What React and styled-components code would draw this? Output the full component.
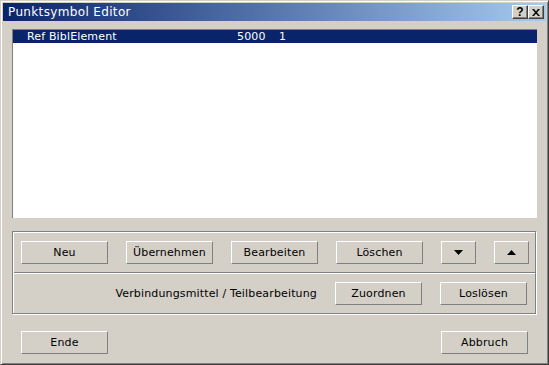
import React from 'react';
import styled, { createGlobalStyle } from 'styled-components';

const GlobalStyle = createGlobalStyle`
  html, body {
    margin: 0;
    padding: 0;
    background: #d4d0c8;
  }
  * {
    box-sizing: border-box;
  }
`;

const FONT = `"DejaVu Sans", "Liberation Sans", sans-serif`;

const entries = [
  { name: 'Ref BiblElement', number: '5000', count: '1', selected: true },
];

const DownArrow = () => (
  <svg width="9" height="5" viewBox="0 0 9 5">
    <polygon points="0,0 9,0 4.5,5" fill="#000" />
  </svg>
);

const UpArrow = () => (
  <svg width="9" height="5" viewBox="0 0 9 5">
    <polygon points="0,5 9,5 4.5,0" fill="#000" />
  </svg>
);

const CloseGlyph = () => (
  <svg width="8" height="7" viewBox="0 0 8 7">
    <path d="M0 0h2l2 2.5L6 0h2L5 3.5 8 7H6L4 4.5 2 7H0l3-3.5z" fill="#000" />
  </svg>
);

export default function App() {
  return (
    <>
      <GlobalStyle />
      <Window>
        <TitleBar>
          <Caption>Punktsymbol Editor</Caption>
          <CaptionButtons>
            <CaptionButton>?</CaptionButton>
            <CaptionButton>
              <CloseGlyph />
            </CaptionButton>
          </CaptionButtons>
        </TitleBar>

        <Body>
          <ListBox>
            {entries.map((e) => (
              <ListRow key={e.name} selected={e.selected}>
                <NameCol>{e.name}</NameCol>
                <NumberCol>{e.number}</NumberCol>
                <span>{e.count}</span>
              </ListRow>
            ))}
          </ListBox>

          <GroupBox>
            <ButtonRow>
              <Button>Neu</Button>
              <Button>Übernehmen</Button>
              <Button>Bearbeiten</Button>
              <Button>Löschen</Button>
              <Button narrow aria-label="nach unten">
                <DownArrow />
              </Button>
              <Button narrow aria-label="nach oben">
                <UpArrow />
              </Button>
            </ButtonRow>
            <Divider />
            <AssignRow>
              <AssignLabel>Verbindungsmittel / Teilbearbeitung</AssignLabel>
              <Button>Zuordnen</Button>
              <Button>Loslösen</Button>
            </AssignRow>
          </GroupBox>

          <Footer>
            <Button>Ende</Button>
            <Button>Abbruch</Button>
          </Footer>
        </Body>
      </Window>
    </>
  );
}

const Window = styled.div`
  width: 549px;
  height: 365px;
  display: flex;
  flex-direction: column;
  background: #d4d0c8;
  border: 1px solid;
  border-color: #d4d0c8 #404040 #404040 #d4d0c8;
  box-shadow: inset 1px 1px #fff, inset -1px -1px #808080;
  padding: 2px;
  font-family: ${FONT};
  font-size: 11px;
  letter-spacing: 0.15px;
  color: #000;
`;

const TitleBar = styled.div`
  height: 18px;
  flex: none;
  display: flex;
  align-items: center;
  justify-content: space-between;
  padding: 0 2px 0 5px;
  background: linear-gradient(to right, #0a246a, #a6caf0);
`;

const Caption = styled.span`
  color: #fff;
  font-size: 12px;
  letter-spacing: 0.35px;
  line-height: 14px;
  white-space: nowrap;
`;

const CaptionButtons = styled.div`
  display: flex;
`;

const CaptionButton = styled.div`
  width: 16px;
  height: 14px;
  display: flex;
  align-items: center;
  justify-content: center;
  background: #d4d0c8;
  border: 1px solid;
  border-color: #fff #404040 #404040 #fff;
  box-shadow: inset -1px -1px #808080;
  font-family: "Liberation Sans", sans-serif;
  font-weight: bold;
  font-size: 12px;
  line-height: 12px;
`;

const Body = styled.div`
  flex: 1;
  display: flex;
  flex-direction: column;
  padding: 8px 9px 8px;
`;

const ListBox = styled.div`
  height: 189px;
  flex: none;
  background: #fff;
  border-top: 1px solid #808080;
  border-left: 1px solid #808080;
`;

const ListRow = styled.div`
  height: 13px;
  display: flex;
  align-items: center;
  padding-left: 14px;
  line-height: 13px;
  white-space: nowrap;
  background: ${(p) => (p.selected ? '#0a246a' : 'transparent')};
  color: ${(p) => (p.selected ? '#fff' : '#000')};
`;

const NameCol = styled.span`
  width: 210px;
`;

const NumberCol = styled.span`
  width: 42px;
`;

const GroupBox = styled.div`
  margin-top: 13px;
  margin-right: 1px;
  flex: none;
  border: 1px solid #808080;
  box-shadow: inset 1px 1px #fff, 1px 1px #fff;
`;

const ButtonRow = styled.div`
  display: flex;
  gap: 18px;
  padding: 9px 8px 8px 8px;
`;

const Divider = styled.div`
  height: 2px;
  margin-left: 1px;
  border-top: 1px solid #808080;
  border-bottom: 1px solid #fff;
`;

const AssignRow = styled.div`
  display: flex;
  align-items: center;
  justify-content: flex-end;
  gap: 18px;
  padding: 8px 8px 8px 8px;
`;

const AssignLabel = styled.span`
  white-space: nowrap;
`;

const Button = styled.button`
  width: ${(p) => (p.narrow ? '35px' : '87px')};
  height: 23px;
  flex: none;
  display: flex;
  align-items: center;
  justify-content: center;
  padding: 0;
  background: #d4d0c8;
  border: 1px solid;
  border-color: #fff #808080 #808080 #fff;
  border-radius: 0;
  font-family: ${FONT};
  font-size: 11px;
  letter-spacing: 0.15px;
  color: #000;
`;

const Footer = styled.div`
  margin-top: 17px;
  display: flex;
  justify-content: space-between;
  padding: 0 9px;
`;
